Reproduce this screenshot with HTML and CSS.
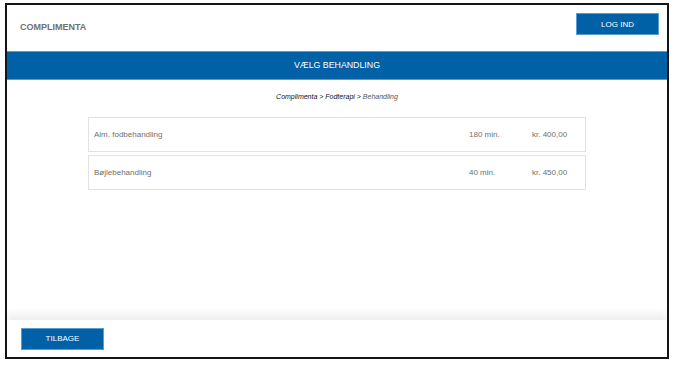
FILE: index.html
```html
<!DOCTYPE html>
<html lang="da">
<head>
  <meta charset="UTF-8" />
  <meta name="viewport" content="width=device-width, initial-scale=1.0"/>
  <title>Complimenta - Vælg behandling</title>
<link rel="stylesheet" href="styles.css">
</head>
<body>

  <div class="frame">
    <header>
      <h2>COMPLIMENTA</h2>
      <button class="btn">LOG IND</button>
    </header>

    <div class="title-bar">VÆLG BEHANDLING</div>

    <main>
      <p class="breadcrumb">Complimenta &gt; Fodterapi &gt; <span>Behandling</span></p>

      <div class="list">
        <div class="row">
          <span class="name">Alm. fodbehandling</span>
          <span class="time">180 min.</span>
          <span class="price">kr. 400,00</span>
        </div>
        <div class="row">
          <span class="name">Bøjlebehandling</span>
          <span class="time">40 min.</span>
          <span class="price">kr. 450,00</span>
        </div>
      </div>
    </main>

    <footer>
      <button class="btn">TILBAGE</button>
    </footer>
  </div>

</body>
</html>
```

FILE: styles.css
```css
:root {
  --primary: #0061a7;
  --primary-light: #5a9bd0;
  --text-grey: #707070;
  --line: #e2e2e2;
}

* {
  box-sizing: border-box;
  margin: 0;
  padding: 0;
}

body, html {
  height: 100%;
  font-family: 'Liberation Sans', Arial, sans-serif;
  background: #fff;
}

.frame {
  display: flex;
  flex-direction: column;
  width: 664px;
  height: 356px;
  margin: 3px 0 0 5px;
  border: 2px solid #151515;
  overflow: hidden;
}

header {
  display: flex;
  justify-content: space-between;
  align-items: center;
  height: 46px;
  padding: 0 8px 8px 13px;
}

header h2 {
  font-size: 9px;
  font-weight: 700;
  color: var(--text-grey);
  margin-top: 6px;
}

.btn {
  width: 83px;
  height: 22px;
  background: var(--primary);
  border: 1px solid var(--primary-light);
  color: #fff;
  font-family: inherit;
  font-size: 8px;
  cursor: pointer;
}

.title-bar {
  height: 29px;
  line-height: 27px;
  background: var(--primary);
  border-top: 1px solid var(--primary-light);
  border-bottom: 1px solid var(--primary-light);
  color: #fff;
  text-align: center;
  font-size: 8.8px;
}

main {
  flex: 1;
  padding-top: 13px;
}

.breadcrumb {
  text-align: center;
  font-size: 7px;
  font-style: italic;
  color: #111;
}

.breadcrumb span {
  color: #555;
}

.list {
  width: 498px;
  margin: 17px auto 0;
  display: flex;
  flex-direction: column;
  gap: 3px;
}

.row {
  display: flex;
  align-items: center;
  height: 35px;
  padding: 0 4px 0 5px;
  border: 1px solid var(--line);
  font-size: 8px;
  color: var(--text-grey);
}

.row .name {
  flex: 1;
}

.row .time {
  width: 63px;
}

.row .price {
  width: 49px;
}

footer {
  height: 37px;
  padding: 7px 14px 0;
  box-shadow: 0 -6px 8px rgba(0, 0, 0, 0.07);
}
```
